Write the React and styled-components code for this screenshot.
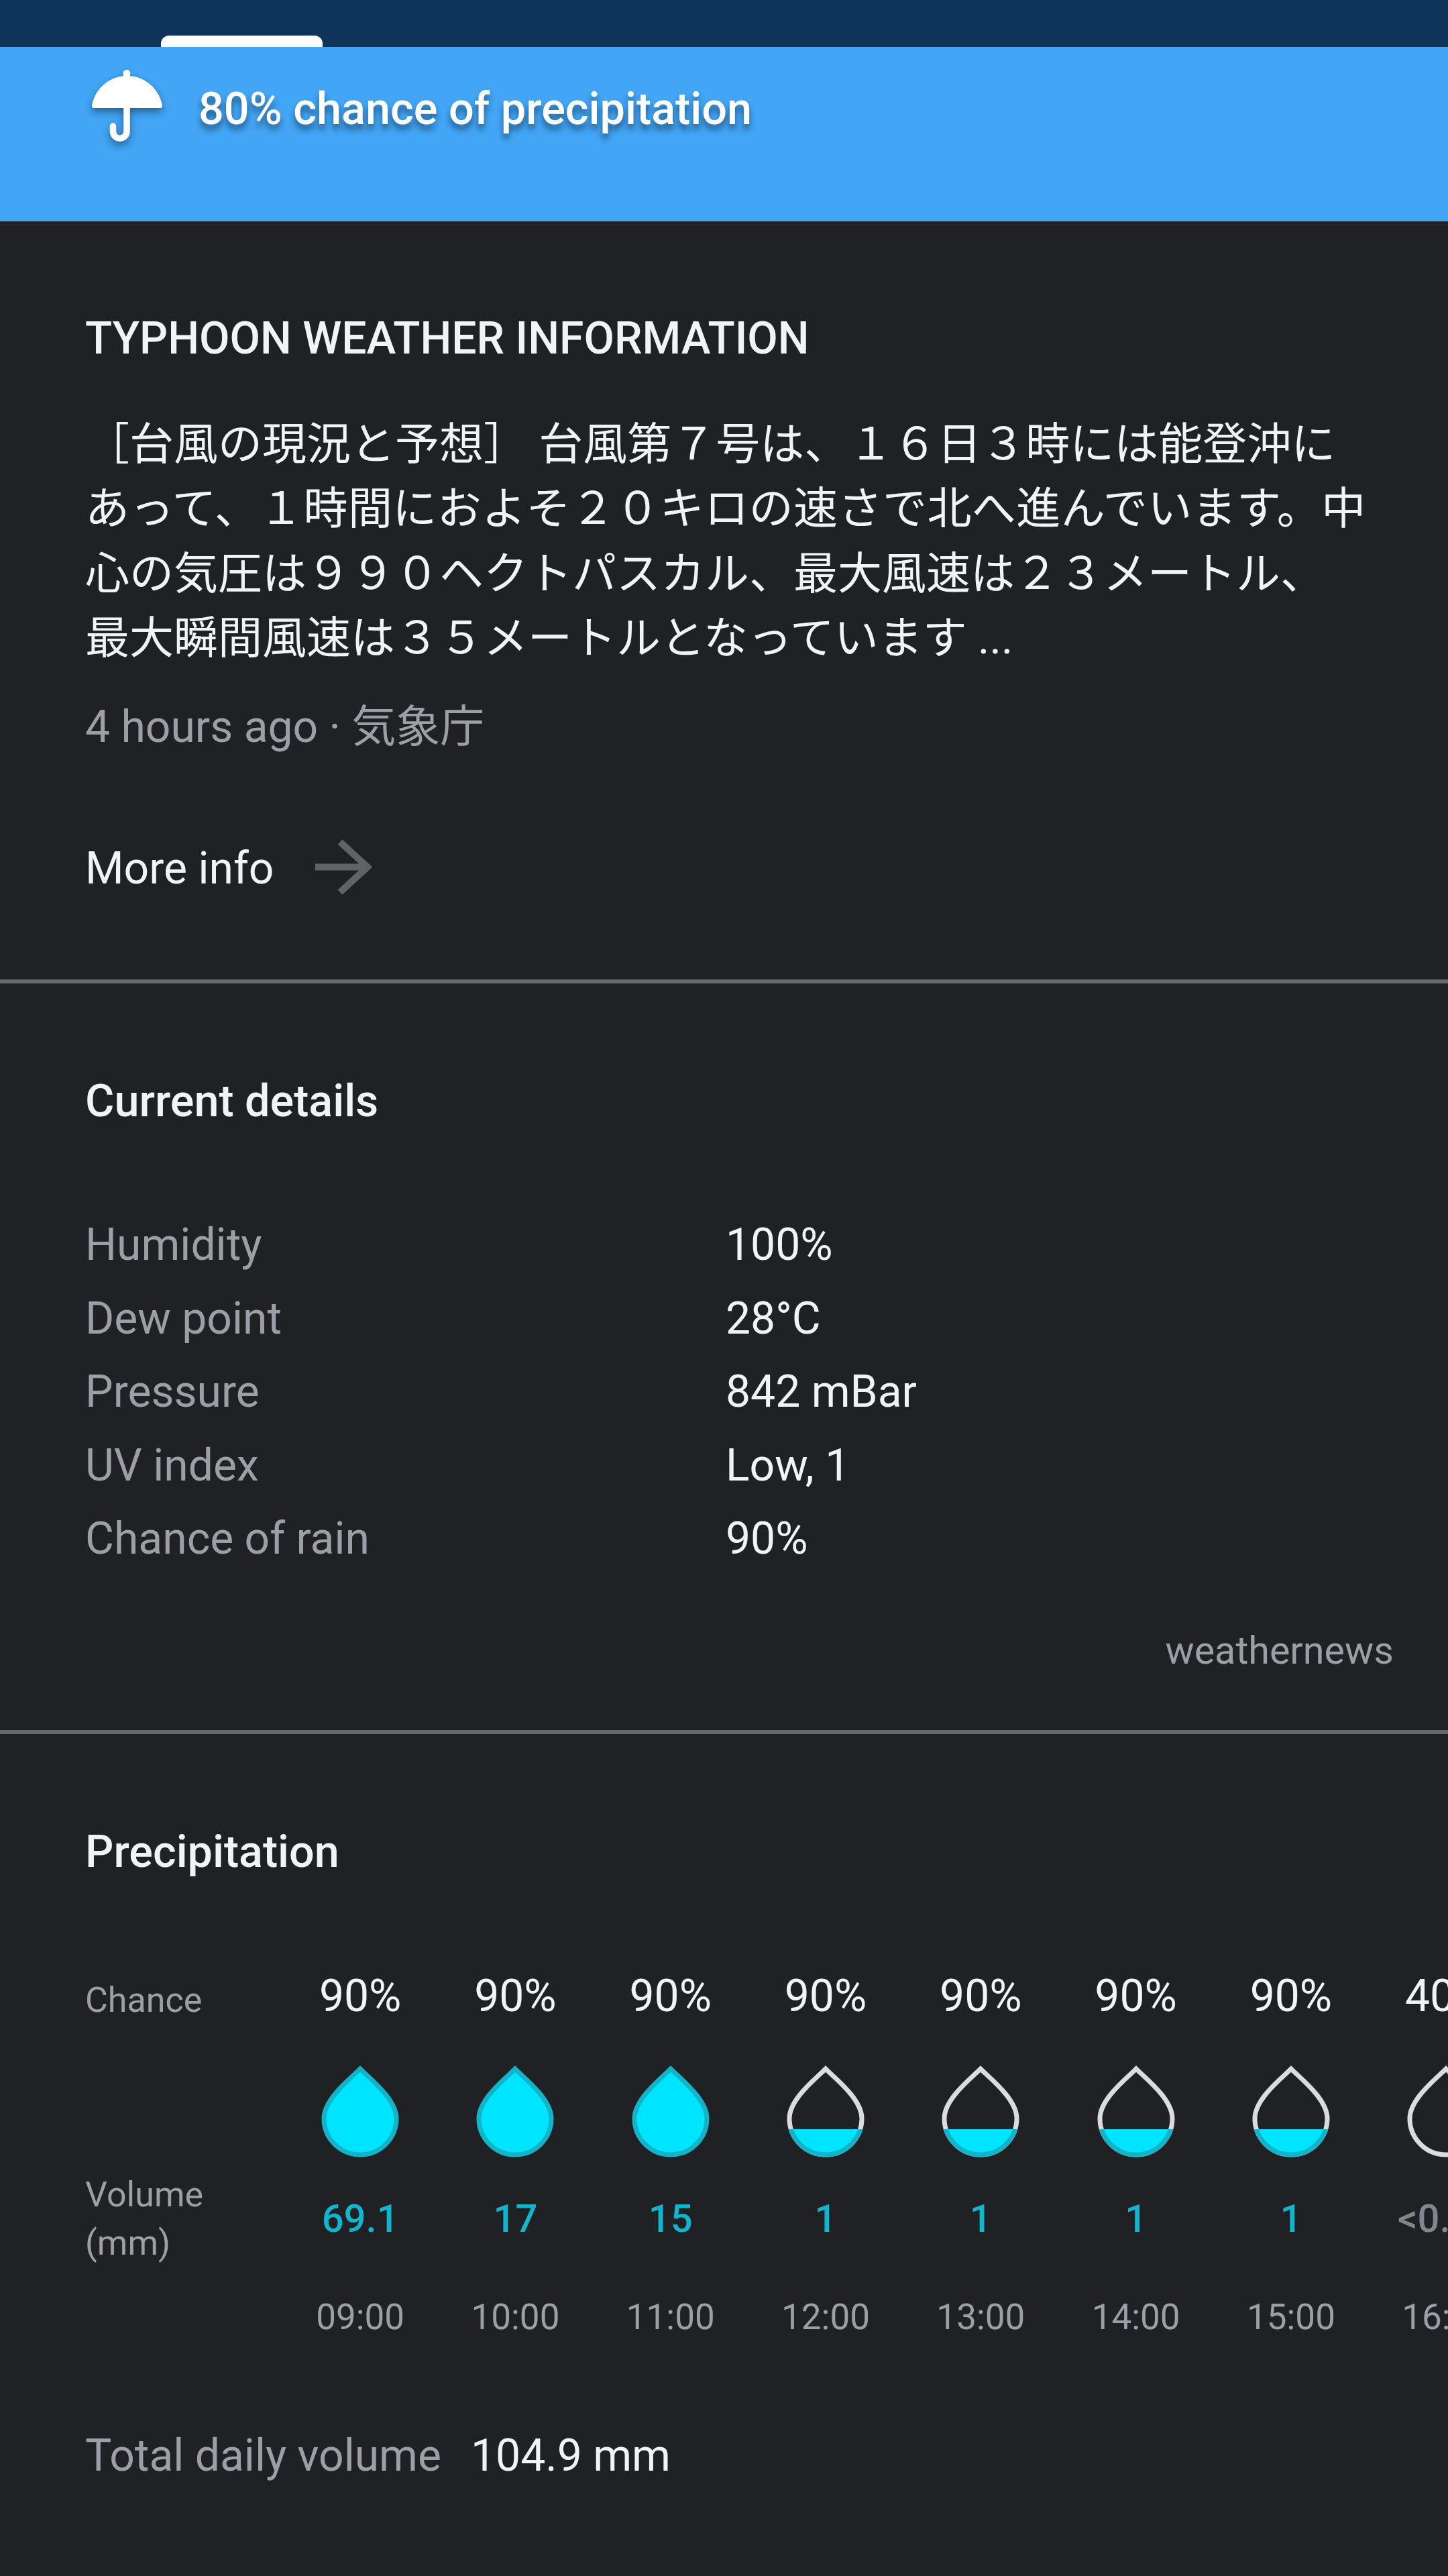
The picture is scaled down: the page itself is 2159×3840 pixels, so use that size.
import styled, { createGlobalStyle } from 'styled-components'

const GlobalStyle = createGlobalStyle`
html, body {
    margin: 0;
    padding: 0;
    background: #202124;
}
body {
    font-family: Roboto, "Noto Sans CJK JP", sans-serif;
}
`

const hours = [
    { chance: '90%', volume: '69.1', time: '09:00', level: 'full' },
    { chance: '90%', volume: '17', time: '10:00', level: 'full' },
    { chance: '90%', volume: '15', time: '11:00', level: 'full' },
    { chance: '90%', volume: '1', time: '12:00', level: 'low' },
    { chance: '90%', volume: '1', time: '13:00', level: 'low' },
    { chance: '90%', volume: '1', time: '14:00', level: 'low' },
    { chance: '90%', volume: '1', time: '15:00', level: 'low' },
    { chance: '40%', volume: '<0.25', time: '16:00', level: 'empty', muted: true },
]

const details = [
    ['Humidity', '100%'],
    ['Dew point', '28°C'],
    ['Pressure', '842 mBar'],
    ['UV index', 'Low, 1'],
    ['Chance of rain', '90%'],
]

const DROP_PATH = 'M58 5 C72 19 112 50 112 79 A54 54 0 0 1 4 79 C4 50 44 19 58 5 Z'

const Drop = ({ level }) => (
    <svg width="116" height="137" viewBox="0 0 116 137">
        {level === 'full' ? (
            <path d={DROP_PATH} fill="#00e5ff" stroke="#14b4c8" strokeWidth="7" />
        ) : (
            <>
                <defs>
                    <clipPath id="drop-low">
                        <rect x="0" y="95" width="116" height="42" />
                    </clipPath>
                </defs>
                <path d={DROP_PATH} fill="none" stroke="#dadce0" strokeWidth="7" />
                {level === 'low' && (
                    <path d={DROP_PATH} fill="#00e5ff" stroke="#14b4c8" strokeWidth="7" clipPath="url(#drop-low)" />
                )}
            </>
        )}
    </svg>
)

const Umbrella = () => (
    <UmbrellaIcon width="105" height="108" viewBox="0 0 105 108">
        <circle cx="52" cy="5.5" r="5.5" fill="#fff" />
        <path d="M47 14 V6 H57 V14 Z" fill="#fff" />
        <path d="M3 57 Q-1 57 0.5 51 C6 26 28 9 52.5 9 C77 9 99 26 104.5 51 Q106 57 102 57 Z" fill="#fff" />
        <path d="M52 55 V92 A10.25 10.25 0 0 1 31.5 92 V84" fill="none" stroke="#fff" strokeWidth="9.5" strokeLinecap="round" />
    </UmbrellaIcon>
)

const App = () => {
    return (
        <Page>
            <GlobalStyle />
            <TopBar>
                <Tab />
            </TopBar>
            <Banner>
                <Umbrella />
                <BannerText>80% chance of precipitation</BannerText>
            </Banner>

            <Section $bottom={126}>
                <CapsTitle>TYPHOON WEATHER INFORMATION</CapsTitle>
                <Story>
                    ［台風の現況と予想］ 台風第７号は、１６日３時には能登沖に<br />
                    <WideLine>あって、１時間におよそ２０キロの速さで北へ進んでいます。中</WideLine><br />
                    心の気圧は９９０ヘクトパスカル、最大風速は２３メートル、<br />
                    最大瞬間風速は３５メートルとなっています ...
                </Story>
                <Meta>4 hours ago · 気象庁</Meta>
                <MoreInfo>
                    <MoreLabel>More info</MoreLabel>
                    <svg width="86" height="83" viewBox="0 0 86 83">
                        <path d="M0 41.5 H78 M37 4 L78 41.5 L37 79" fill="none" stroke="#5f6368" strokeWidth="10" />
                    </svg>
                </MoreInfo>
            </Section>
            <Divider />

            <Section $bottom={78}>
                <Heading>Current details</Heading>
                <DetailList>
                    {details.map(([label, value]) => (
                        <DetailRow key={label}>
                            <DetailLabel>{label}</DetailLabel>
                            <DetailValue>{value}</DetailValue>
                        </DetailRow>
                    ))}
                </DetailList>
                <Source>weathernews</Source>
            </Section>
            <Divider />

            <Section $bottom={140}>
                <Heading>Precipitation</Heading>
                <Hourly>
                    <LabelColumn>
                        <ChanceLabel>Chance</ChanceLabel>
                        <VolumeLabel>Volume<br />(mm)</VolumeLabel>
                    </LabelColumn>
                    {hours.map((h) => (
                        <HourColumn key={h.time}>
                            <Percent>{h.chance}</Percent>
                            <DropCell><Drop level={h.level} /></DropCell>
                            <Volume $muted={h.muted}>{h.volume}</Volume>
                            <Time>{h.time}</Time>
                        </HourColumn>
                    ))}
                </Hourly>
                <Total>
                    <TotalLabel>Total daily volume</TotalLabel>
                    <TotalValue>104.9 mm</TotalValue>
                </Total>
            </Section>
        </Page>
    )
}

const Page = styled.div`
width: 2159px;
min-height: 3840px;
background: #202124;
overflow: hidden;
`

const TopBar = styled.div`
height: 70px;
background: #0f345c;
display: flex;
align-items: flex-end;
padding-left: 240px;
`

const Tab = styled.div`
width: 241px;
height: 17px;
background: #fff;
border-radius: 12px 12px 0 0;
`

const Banner = styled.div`
height: 260px;
box-sizing: border-box;
background: #42a5f5;
display: flex;
align-items: flex-start;
padding: 34px 0 0 137px;
`

const UmbrellaIcon = styled.svg`
flex: none;
filter: drop-shadow(0 6px 6px rgba(0, 0, 0, 0.4));
`

const BannerText = styled.div`
margin: 10px 0 0 54px;
font-size: 66.6px;
font-weight: 500;
line-height: 96px;
color: #fff;
text-shadow: 0 8px 10px rgba(0, 0, 0, 0.45);
`

const Section = styled.section`
padding: 135px 0 ${({ $bottom }) => $bottom}px 127px;
`

const Divider = styled.div`
height: 6px;
background: #67686b;
`

const CapsTitle = styled.h2`
margin: 0;
font-size: 66px;
font-weight: 500;
line-height: 80px;
color: #f1f3f4;
`

const Heading = styled(CapsTitle)`
font-size: 66.5px;
`

const Story = styled.p`
margin: 70px 0 0;
font-size: 66px;
line-height: 96.3px;
color: #f1f3f4;
white-space: nowrap;
`

const WideLine = styled.span`
letter-spacing: 0.42px;
`

const Meta = styled.div`
margin-top: 44px;
font-size: 66px;
line-height: 80px;
color: #9aa0a6;
`

const MoreInfo = styled.div`
margin-top: 127px;
height: 83px;
display: flex;
align-items: center;
gap: 62px;
font-size: 66px;
color: #f1f3f4;
`

const MoreLabel = styled.span`
margin-top: 4px;
`

const DetailList = styled.div`
margin-top: 120px;
`

const DetailRow = styled.div`
display: grid;
grid-template-columns: 955px auto;
height: 109.5px;
align-items: center;
font-size: 66px;
`

const DetailLabel = styled.span`
color: #9aa0a6;
`

const DetailValue = styled.span`
color: #f1f3f4;
`

const Source = styled.div`
margin: 72px 81px 0 0;
text-align: right;
font-size: 57.5px;
line-height: 80px;
color: #9aa0a6;
`

const Hourly = styled.div`
margin-top: 126px;
display: flex;
`

const LabelColumn = styled.div`
flex: 0 0 294.5px;
font-size: 52px;
color: #9aa0a6;
`

const ChanceLabel = styled.div`
height: 100px;
line-height: 112px;
`

const VolumeLabel = styled.div`
margin-top: 210px;
line-height: 72px;
`

const HourColumn = styled.div`
flex: 0 0 231.3px;
display: flex;
flex-direction: column;
align-items: center;
white-space: nowrap;
`

const Percent = styled.div`
height: 100px;
line-height: 100px;
font-size: 66px;
color: #f1f3f4;
`

const DropCell = styled.div`
margin-top: 53px;
height: 137px;
`

const Volume = styled.div`
margin-top: 41px;
height: 100px;
line-height: 100px;
font-size: 58px;
font-weight: 500;
color: ${({ $muted }) => ($muted ? '#80868b' : '#12b5cb')};
`

const Time = styled.div`
margin-top: 47px;
height: 100px;
line-height: 100px;
font-size: 53px;
color: #9aa0a6;
`

const Total = styled.div`
margin-top: 117px;
display: flex;
align-items: center;
gap: 44px;
height: 80px;
font-size: 66px;
`

const TotalLabel = styled.span`
color: #9aa0a6;
`

const TotalValue = styled.span`
color: #f1f3f4;
`

export default App
